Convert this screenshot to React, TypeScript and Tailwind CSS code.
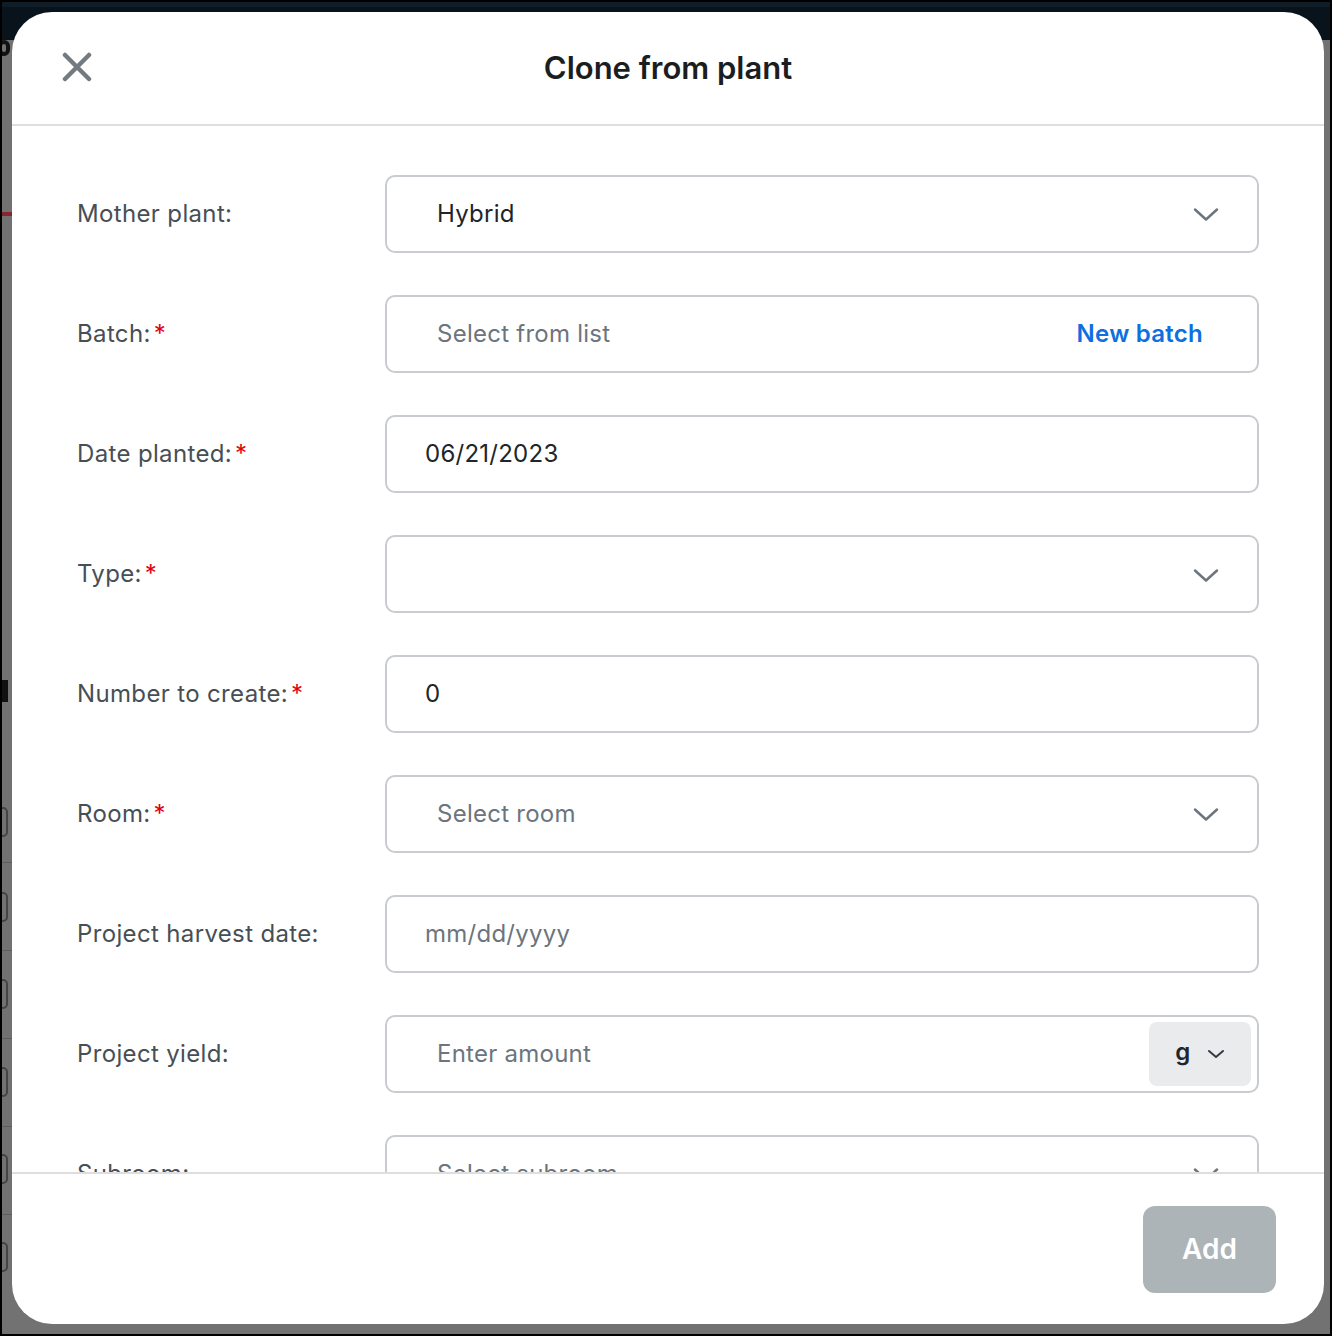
import React from 'react';

const Chevron = ({ small = false }: { small?: boolean }) =>
  small ? (
    <svg width="18" height="10" viewBox="0 0 18 10" fill="none">
      <path d="M2 2l7 6 7-6" stroke="#343a40" strokeWidth="2" strokeLinecap="round" strokeLinejoin="round" />
    </svg>
  ) : (
    <svg width="26" height="15" viewBox="0 0 26 15" fill="none">
      <path d="M2 2.5l11 10 11-10" stroke="#6c757d" strokeWidth="2.5" strokeLinecap="round" strokeLinejoin="round" />
    </svg>
  );

interface RowProps {
  label: string;
  required?: boolean;
  children: React.ReactNode;
}

const Row: React.FC<RowProps> = ({ label, required, children }) => (
  <div className="flex items-center h-[78px] shrink-0">
    <div className="w-[308px] shrink-0 text-[24px] tracking-[0.35px] text-[#474f55] leading-none">
      {label}
      {required && <span className="text-[#e3000f] ml-[3px]">*</span>}
    </div>
    <div className="flex-1 h-full rounded-[10px] border-2 border-[#c8ccd0] flex items-center text-[24px] tracking-[0.25px] leading-none">
      {children}
    </div>
  </div>
);

export default function App() {
  return (
    <div className="relative w-[1332px] h-[1336px] border-2 border-black bg-[#727272] overflow-hidden font-['Inter',sans-serif]">
      {/* page behind the overlay */}
      <div className="h-[38px] bg-[#09131b] border-t-[5px] border-[#101c26]" />
      <div className="absolute left-0 top-[38px] w-[12px] h-[16px] rounded-full border-[4px] border-[#111] -ml-[4px]" />
      <div className="absolute left-0 top-[210px] w-[10px] h-[4px] bg-[#8a2430]" />
      <div className="absolute left-0 top-[678px] w-[6px] h-[22px] bg-[#111]" />
      {[805, 890, 977, 1065, 1152, 1240].map((y) => (
        <div key={y} className="absolute -left-[8px] w-[14px] h-[30px] rounded-[5px] border-2 border-[#444]" style={{ top: y }} />
      ))}
      {[860, 948, 1036, 1124, 1212].map((y) => (
        <div key={y} className="absolute left-0 w-[10px] h-px bg-[#5e5e5e]" style={{ top: y }} />
      ))}

      {/* modal */}
      <div className="absolute left-[10px] top-[10px] w-[1312px] h-[1312px] bg-white rounded-[40px] flex flex-col overflow-hidden">
        <div className="h-[114px] shrink-0 border-b-2 border-[#dedede] flex items-center relative">
          <button className="absolute left-[50px] top-[40px] w-[30px] h-[30px]">
            <svg width="30" height="30" viewBox="0 0 30 30" fill="none">
              <path d="M3 3l24 24M27 3L3 27" stroke="#737b80" strokeWidth="4.5" strokeLinecap="round" />
            </svg>
          </button>
          <h1 className="w-full text-center text-[31px] font-semibold text-[#1b1e21]">Clone from plant</h1>
        </div>

        <div className="h-[1046px] shrink-0 overflow-hidden px-[65px] pt-[49px] flex flex-col gap-[42px]">
          <Row label="Mother plant:">
            <span className="pl-[50px] flex-1 text-[#212529]">Hybrid</span>
            <span className="pr-[38px]"><Chevron /></span>
          </Row>
          <Row label="Batch:" required>
            <span className="pl-[50px] flex-1 text-[#6c757d]">Select from list</span>
            <span className="pr-[54px] text-[#0d6fe0] font-semibold">New batch</span>
          </Row>
          <Row label="Date planted:" required>
            <span className="pl-[38px] flex-1 text-[#212529]">06/21/2023</span>
          </Row>
          <Row label="Type:" required>
            <span className="flex-1" />
            <span className="pr-[38px] pt-[3px]"><Chevron /></span>
          </Row>
          <Row label="Number to create:" required>
            <span className="pl-[38px] flex-1 text-[#212529]">0</span>
          </Row>
          <Row label="Room:" required>
            <span className="pl-[50px] flex-1 text-[#6c757d]">Select room</span>
            <span className="pr-[38px]"><Chevron /></span>
          </Row>
          <Row label="Project harvest date:">
            <span className="pl-[38px] flex-1 text-[#6c757d]">mm/dd/yyyy</span>
          </Row>
          <Row label="Project yield:">
            <span className="pl-[50px] flex-1 text-[#6c757d]">Enter amount</span>
            <span className="mr-[6px] w-[102px] h-[64px] rounded-[8px] bg-[#e9ebed] flex items-center justify-center gap-[16px]">
              <span className="font-semibold text-[#212529] -mt-[4px]">g</span>
              <Chevron small />
            </span>
          </Row>
          <Row label="Subroom:">
            <span className="pl-[50px] flex-1 text-[#6c757d]">Select subroom</span>
            <span className="pr-[38px]"><Chevron /></span>
          </Row>
        </div>

        <div className="flex-1 border-t-2 border-[#dedede] flex items-center justify-end pr-[48px]">
          <button className="w-[133px] h-[87px] rounded-[12px] bg-[#adb4b8] text-white text-[28px] font-semibold">
            Add
          </button>
        </div>
      </div>
    </div>
  );
}
